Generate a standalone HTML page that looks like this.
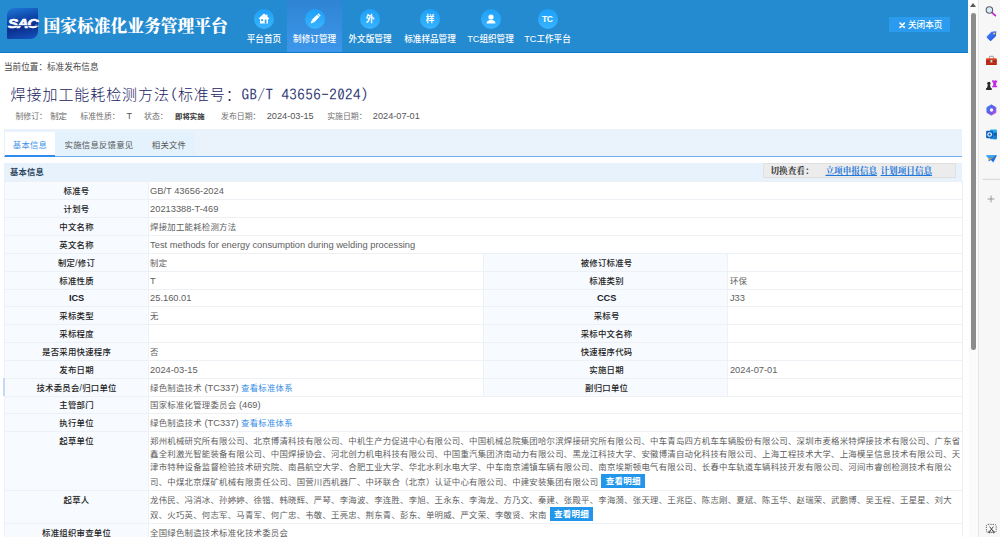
<!DOCTYPE html><html lang="zh-CN"><head><meta charset="utf-8"><title>标准发布信息</title><style>
*{box-sizing:border-box;margin:0;padding:0}
html,body{width:1000px;height:537px;overflow:hidden;background:#fff}
body{position:relative;font-family:"Liberation Sans","Noto Sans CJK SC",sans-serif;font-size:8.6px;color:#333}
a{color:#3a8ee6;text-decoration:none}
.abs{position:absolute;white-space:nowrap}
#hdr{position:absolute;left:0;top:0;width:968px;height:53px;background:#258bd0;border-bottom:1px solid #0c79c9}
#logo{position:absolute;left:7px;top:8.2px;width:31.4px;height:30.8px;border-radius:7.5px 1px 7.5px 1px;background:linear-gradient(168deg,#1f78d8 0%,#0d44a8 38%,#0a2f90 62%,#1655c0 100%)}
#logo span{position:absolute;left:-0.4px;top:8.3px;width:31.4px;text-align:center;font:italic bold 13px/15px "Liberation Sans",sans-serif;color:#fff;letter-spacing:-0.9px;transform:scaleX(1.2);-webkit-text-stroke:0.6px #fff}
#logo i{position:absolute;left:0;top:16.9px;width:31.4px;height:0.7px;background:rgba(12,52,150,0.7)}
#ttl{left:43.6px;top:12.6px;font:900 16.75px/24px "Noto Serif CJK SC","Liberation Serif",serif;color:#fff}
.nv{position:absolute;top:0;height:52px;text-align:center;color:#fff;font-size:8.6px;font-weight:500}
.nv.on{background:linear-gradient(180deg,#2f84d4 0%,#3d97ea 100%)}
.nv .ic{position:absolute;left:50%;top:9px;width:20px;height:20px;margin-left:-10px;border-radius:50%;background:linear-gradient(180deg,#1ea0f8,#38b4ff)}
.nv .ic svg{position:absolute;left:0;top:0;width:20px;height:20px}
.nv .ic b{position:absolute;left:0;top:0;width:20px;line-height:20.4px;font-size:8.7px;color:#fff;text-align:center}
.nv .tc{font-size:9.2px}
.nv .lb{position:absolute;left:-10px;right:-10px;top:33px;line-height:12px;white-space:nowrap}
#cls{position:absolute;left:889px;top:17px;width:61px;height:15.4px;background:#2a9bee;color:#fff;font-size:8.6px;line-height:17px;white-space:nowrap;font-weight:500}
#cls svg{position:absolute;left:9.6px;top:5.2px;width:6.4px;height:6.4px}
#cls .t{position:absolute;left:19px;top:0}
#bc{left:4px;top:61px;line-height:13px;font-size:8.6px;color:#444}
#h1{left:10.6px;top:83.6px;line-height:20px;font-size:15px;letter-spacing:0.93px;color:#1a2360;font-family:"Noto Sans CJK SC",sans-serif;font-weight:300}
#h1 span{font-family:"IPAGothic","Liberation Mono",monospace;letter-spacing:0.46px;color:#323b78}
.inf{top:110px;line-height:13px;font-size:7.9px;color:#707070}
.inf.v{font-size:9.2px;color:#555}
#tabs{position:absolute;left:4px;top:128.6px;width:958px;height:28px;background:#eaf3fc;border-bottom:1px solid #6cadf0}
.tab{position:absolute;top:3px;height:24px;line-height:27.5px;text-align:center;font-size:8.4px;letter-spacing:0.22px;color:#555;background:#e3f2fd}
.tab.on{background:#fff;color:#3f93ea;border-bottom:2px solid #2f8cee;height:25px}
#sec{position:absolute;left:4px;top:163px;width:958px;height:18.4px;background:#e8f2fc}
#sec b{position:absolute;left:6px;top:0;line-height:18.2px;font-size:8.3px;letter-spacing:0.22px;color:#2b4560}
#sw{position:absolute;left:763px;top:163.3px;width:193px;height:14.4px;background:#ececec;border:1px solid #e0e0e0;font:bold 8.6px/12.6px "Noto Serif CJK SC","Liberation Serif",serif;color:#333;white-space:nowrap}
#sw span{position:absolute;top:0}
#sw a{color:#1f78dc;text-decoration:underline}
.row{position:absolute;left:4px;width:958px;border-top:1px solid #edf0f4}
.c{position:absolute;top:0;bottom:0;padding:2.9px 0 0 1.6px;line-height:13.05px;font-size:8.4px;letter-spacing:0.245px;color:#5e5e5e;border-left:1px solid #edf0f4;white-space:nowrap;overflow:hidden}
.c.l{background:#f7fafe;color:#222;font-weight:500;text-align:center;font-size:8.4px;letter-spacing:0.25px;border-left:none}
.c.l2{background:#f7fafe;color:#222;font-weight:500;text-align:center;font-size:8.4px;letter-spacing:0.25px}
i.e{font-style:normal;font-size:9.3px;letter-spacing:0}
.c b{font-size:9.2px;letter-spacing:0;color:#1a1a2a}
.ll{position:relative;top:1.1px}
.btn{display:inline-block;position:relative;top:-1.6px;background:#2196ea;color:#fff;font-weight:bold;font-size:8.5px;line-height:14.3px;height:14.3px;padding:0 4.3px;margin-left:3px;vertical-align:middle}
#sb{position:absolute;left:968px;top:0;width:10px;height:537px;background:linear-gradient(90deg,#fff 0,#fff 1px,#fbfbfb 1px)}
#sb .th{position:absolute;left:2.9px;top:12.5px;width:5px;height:337px;border-radius:2.3px;background:#8c8c8c}
#sb .up{position:absolute;left:2.2px;top:3.2px;width:0;height:0;border-left:3.2px solid transparent;border-right:3.2px solid transparent;border-bottom:4px solid #585858}
#side{position:absolute;left:978px;top:0;width:22px;height:537px;background:#f7f7f7;box-shadow:inset 1px 0 0 #e8e8e8}
#side svg{position:absolute;left:0;top:0}
</style></head><body>
<div id="hdr">
<div id="logo"><span>SAC</span><i></i></div>
<div id="ttl" class="abs">国家标准化业务管理平台</div>
<div class="nv" style="left:240.6px;width:46.6px"><div class="ic"><svg viewBox="0 0 20 20"><path d="M10 4.6 L4.6 9.6 L5.3 10.3 L6 9.7 V14.5 H14 V9.7 L14.7 10.3 L15.4 9.6 L13.4 7.7 V5.6 H12.2 V6.6 Z" fill="#fff"/><rect x="7.2" y="10.2" width="1.9" height="1.9" fill="#2aa5f6"/><rect x="10.7" y="10.6" width="1.8" height="3.9" fill="#2aa5f6"/></svg></div><div class="lb">平台首页</div></div>
<div class="nv on" style="left:287.2px;width:54.8px"><div class="ic"><svg viewBox="0 0 20 20"><g transform="translate(10.1 10) rotate(45)" fill="#fff"><rect x="-1.7" y="-4.4" width="3.4" height="7.2"/><path d="M-1.7 2.8 H1.7 L0 6.4 Z"/><rect x="-1.7" y="-6.4" width="3.4" height="1.5" rx="0.6"/></g></svg></div><div class="lb">制修订管理</div></div>
<div class="nv" style="left:342px;width:56px"><div class="ic"><b>外</b></div><div class="lb">外文版管理</div></div>
<div class="nv" style="left:398px;width:64px"><div class="ic"><b>样</b></div><div class="lb">标准样品管理</div></div>
<div class="nv" style="left:462px;width:57px"><div class="ic"><svg viewBox="0 0 20 20"><circle cx="10" cy="8" r="2.6" fill="#fff"/><path d="M5.6 14.6 Q5.6 11 10 11 Q14.4 11 14.4 14.6 Z" fill="#fff"/></svg></div><div class="lb"><span class="tc">TC</span>组织管理</div></div>
<div class="nv" style="left:519px;width:57px"><div class="ic"><b style="font-size:8.6px;letter-spacing:-0.4px;text-indent:-0.4px">TC</b></div><div class="lb"><span class="tc">TC</span>工作平台</div></div>
<div id="cls"><svg viewBox="0 0 10 10"><path d="M1.6 1.6 L8.4 8.4 M8.4 1.6 L1.6 8.4" stroke="#fff" stroke-width="2.6" stroke-linecap="round"/></svg><span class="t">关闭本页</span></div>
</div>
<div id="bc" class="abs">当前位置：标准发布信息</div>
<div id="h1" class="abs">焊接加工能耗检测方法<span>(</span>标准号：<span>GB/T 43656-2024)</span></div>
<div class="abs inf" style="left:15.4px;">制修订：</div>
<div class="abs inf" style="left:50.2px;font-size:8.4px;color:#666">制定</div>
<div class="abs inf" style="left:80.3px;">标准性质：</div>
<div class="abs inf v" style="left:126.5px;">T</div>
<div class="abs inf" style="left:144px;">状态：</div>
<div class="abs inf" style="left:175px;font-weight:bold;color:#333;font-size:7.4px">即将实施</div>
<div class="abs inf" style="left:221px;">发布日期：</div>
<div class="abs inf v" style="left:266.7px;">2024-03-15</div>
<div class="abs inf" style="left:327.2px;">实施日期：</div>
<div class="abs inf v" style="left:372.8px;">2024-07-01</div>
<div id="tabs">
<div class="tab on" style="left:1px;width:50px">基本信息</div>
<div class="tab" style="left:51px;width:88px">实施信息反馈意见</div>
<div class="tab" style="left:139px;width:52px">相关文件</div>
</div>
<div id="sec"><b>基本信息</b></div>
<div id="sw"><span style="left:6.5px">切换查看：</span><span style="left:61.5px"><a>立项申报信息</a></span><span style="left:116.5px"><a>计划项目信息</a></span></div>
<div class="row" style="top:181.40px;height:18.55px"><div class="c l" style="left:0;width:143.5px">标准号</div><div class="c" style="left:143.5px;width:814.5px"><i class="e">GB/T 43656-2024</i></div></div>
<div class="row" style="top:199.25px;height:18.55px"><div class="c l" style="left:0;width:143.5px">计划号</div><div class="c" style="left:143.5px;width:814.5px"><i class="e">20213388-T-469</i></div></div>
<div class="row" style="top:217.10px;height:18.55px"><div class="c l" style="left:0;width:143.5px">中文名称</div><div class="c" style="left:143.5px;width:814.5px">焊接加工能耗检测方法</div></div>
<div class="row" style="top:234.95px;height:18.55px"><div class="c l" style="left:0;width:143.5px">英文名称</div><div class="c" style="left:143.5px;width:814.5px"><i class="e">Test methods for energy consumption during welding processing</i></div></div>
<div class="row" style="top:252.80px;height:18.55px"><div class="c l" style="left:0;width:143.5px">制定/修订</div><div class="c" style="left:143.5px;width:335.8px">制定</div><div class="c l2" style="left:479.3px;width:244.0px">被修订标准号</div><div class="c" style="left:723.3px;width:234.7px"></div></div>
<div class="row" style="top:270.65px;height:18.55px"><div class="c l" style="left:0;width:143.5px">标准性质</div><div class="c" style="left:143.5px;width:335.8px"><i class="e">T</i></div><div class="c l2" style="left:479.3px;width:244.0px">标准类别</div><div class="c" style="left:723.3px;width:234.7px">环保</div></div>
<div class="row" style="top:288.50px;height:18.55px"><div class="c l" style="left:0;width:143.5px"><b>ICS</b></div><div class="c" style="left:143.5px;width:335.8px"><i class="e">25.160.01</i></div><div class="c l2" style="left:479.3px;width:244.0px"><b>CCS</b></div><div class="c" style="left:723.3px;width:234.7px"><i class="e">J33</i></div></div>
<div class="row" style="top:306.35px;height:18.55px"><div class="c l" style="left:0;width:143.5px">采标类型</div><div class="c" style="left:143.5px;width:335.8px">无</div><div class="c l2" style="left:479.3px;width:244.0px">采标号</div><div class="c" style="left:723.3px;width:234.7px"></div></div>
<div class="row" style="top:324.20px;height:18.55px"><div class="c l" style="left:0;width:143.5px">采标程度</div><div class="c" style="left:143.5px;width:335.8px"></div><div class="c l2" style="left:479.3px;width:244.0px">采标中文名称</div><div class="c" style="left:723.3px;width:234.7px"></div></div>
<div class="row" style="top:342.05px;height:18.55px"><div class="c l" style="left:0;width:143.5px">是否采用快速程序</div><div class="c" style="left:143.5px;width:335.8px">否</div><div class="c l2" style="left:479.3px;width:244.0px">快速程序代码</div><div class="c" style="left:723.3px;width:234.7px"></div></div>
<div class="row" style="top:359.90px;height:18.55px"><div class="c l" style="left:0;width:143.5px">发布日期</div><div class="c" style="left:143.5px;width:335.8px"><i class="e">2024-03-15</i></div><div class="c l2" style="left:479.3px;width:244.0px">实施日期</div><div class="c" style="left:723.3px;width:234.7px"><i class="e">2024-07-01</i></div></div>
<div class="row" style="top:377.75px;height:18.55px"><div class="c l" style="left:0;width:143.5px">技术委员会/归口单位</div><div class="c" style="left:143.5px;width:335.8px">绿色制造技术 <i class="e">(TC337)</i> <a>查看标准体系</a></div><div class="c l2" style="left:479.3px;width:244.0px">副归口单位</div><div class="c" style="left:723.3px;width:234.7px"></div></div>
<div class="row" style="top:395.60px;height:18.55px"><div class="c l" style="left:0;width:143.5px">主管部门</div><div class="c" style="left:143.5px;width:814.5px">国家标准化管理委员会 <i class="e">(469)</i></div></div>
<div class="row" style="top:413.45px;height:18.55px"><div class="c l" style="left:0;width:143.5px">执行单位</div><div class="c" style="left:143.5px;width:814.5px">绿色制造技术 <i class="e">(TC337)</i> <a>查看标准体系</a></div></div>
<div class="row" style="top:431.30px;height:59.70px"><div class="c l" style="left:0;width:143.5px">起草单位</div><div class="c" style="left:143.5px;width:814.5px">郑州机械研究所有限公司、北京博清科技有限公司、中机生产力促进中心有限公司、中国机械总院集团哈尔滨焊接研究所有限公司、中车青岛四方机车车辆股份有限公司、深圳市麦格米特焊接技术有限公司、广东省<br>鑫全利激光智能装备有限公司、中国焊接协会、河北创力机电科技有限公司、中国重汽集团济南动力有限公司、黑龙江科技大学、安徽博清自动化科技有限公司、上海工程技术大学、上海模呈信息技术有限公司、天<br>津市特种设备监督检验技术研究院、南昌航空大学、合肥工业大学、华北水利水电大学、中车南京浦镇车辆有限公司、南京埃斯顿电气有限公司、长春中车轨道车辆科技开发有限公司、河间市睿创检测技术有限公<br><span class="ll">司、中煤北京煤矿机械有限责任公司、国营川西机器厂、中环联合（北京）认证中心有限公司、中建安装集团有限公司<span class="btn">查看明细</span></span></div></div>
<div class="row" style="top:490.30px;height:33.60px"><div class="c l" style="left:0;width:143.5px">起草人</div><div class="c" style="left:143.5px;width:814.5px">龙伟民、冯消冰、孙婷婷、徐锴、韩晓辉、严琴、李海波、李连胜、李旭、王永东、李海龙、方乃文、秦建、张殿平、李海漪、张天理、王兆臣、陈志刚、夏斌、陈玉华、赵瑞荣、武鹏博、吴玉程、王星星、刘大<br><span class="ll">双、火巧英、何志军、马青军、何广忠、韦敬、王亮忠、荆东青、彭东、单明威、严文荣、李敬贤、宋南<span class="btn">查看明细</span></span></div></div>
<div class="row" style="top:523.20px;height:18.55px"><div class="c l" style="left:0;width:143.5px">标准组织审查单位</div><div class="c" style="left:143.5px;width:814.5px">全国绿色制造技术标准化技术委员会</div></div>
<div style="position:absolute;left:961.5px;top:181px;width:1px;height:356px;background:#edf0f4"></div>
<div style="position:absolute;left:4px;top:181px;width:1px;height:356px;background:#edf0f4"></div>
<div style="position:absolute;left:3px;top:378px;width:1.5px;height:17.5px;background:#c5d9f4"></div>
<div id="sb"><div class="up"></div><div class="th"></div></div>
<div id="side"><svg width="22" height="537" viewBox="978 0 22 537"><defs>
<linearGradient id="gTag" x1="0" y1="0" x2="1" y2="1"><stop offset="0" stop-color="#4a86ff"/><stop offset="1" stop-color="#1f4fe0"/></linearGradient>
<linearGradient id="gM" x1="0" y1="0" x2="1" y2="1"><stop offset="0" stop-color="#2f7df5"/><stop offset="0.55" stop-color="#6a5be8"/><stop offset="1" stop-color="#c04fd8"/></linearGradient>
<linearGradient id="gBox" x1="0" y1="0" x2="0" y2="1"><stop offset="0" stop-color="#e0452a"/><stop offset="1" stop-color="#b3200f"/></linearGradient>
</defs>
<!-- search -->
<line x1="991.8" y1="12.4" x2="995.4" y2="15.6" stroke="#c41fd6" stroke-width="1.7" stroke-linecap="round"/>
<circle cx="989.4" cy="10" r="3.2" fill="#d6ecfb" stroke="#5a5f66" stroke-width="1.1"/>
<!-- tag -->
<path d="M996.2 31.3 L991.4 31.7 L986.8 36.6 Q986.4 37.2 986.9 37.8 L990 40.8 Q990.6 41.3 991.2 40.7 L996 35.9 Z" fill="url(#gTag)"/>
<circle cx="994.2" cy="33.5" r="1" fill="#ffd23e"/>
<!-- toolbox -->
<path d="M989.4 58.4 V57 Q989.4 56.3 990.1 56.3 H992.7 Q993.4 56.3 993.4 57 V58.4" fill="none" stroke="#8d8d8d" stroke-width="0.9"/>
<rect x="986" y="58.2" width="10.8" height="6.9" rx="0.9" fill="url(#gBox)"/>
<rect x="986" y="60.6" width="10.8" height="1" fill="#8f1a0c"/>
<rect x="990.4" y="60" width="2" height="2.4" rx="0.4" fill="#e8e8e8" stroke="#777" stroke-width="0.4"/>
<!-- chess -->
<path d="M992.6 80 h1 v1 h1 v-1 h1.1 v1 h1 v-1 h0.4 v2.4 h-0.9 v3.6 h1 v1.3 h-5 v-1.3 h1 v-3.6 h-0.9 v-2.4 z" fill="#c22be2"/>
<circle cx="988.9" cy="83.4" r="1.7" fill="#2b2b2b"/>
<path d="M987.9 84.6 h2 l0.9 3.4 h0.9 v1.9 h-5.6 v-1.9 h0.9 z" fill="#2b2b2b"/>
<!-- m365 -->
<path d="M991.4 104.8 L995.9 107.4 V112.6 L991.4 115.2 L986.9 112.6 V107.4 Z" fill="url(#gM)" stroke="url(#gM)" stroke-width="0.8" stroke-linejoin="round"/>
<circle cx="991.5" cy="110" r="1.7" fill="#f7f7f7"/>
<!-- outlook -->
<rect x="990" y="129.4" width="6.9" height="9.8" rx="0.9" fill="#28a8ea"/>
<rect x="993.4" y="132.6" width="3.5" height="3.3" fill="#0f5fb4"/>
<rect x="993.4" y="135.9" width="3.5" height="3.3" fill="#1a7bd4"/>
<rect x="986.1" y="130.8" width="7" height="7.4" rx="1" fill="#0f63bf"/>
<circle cx="989.6" cy="134.5" r="1.8" fill="none" stroke="#fff" stroke-width="1.1"/>
<!-- plane -->
<path d="M986 155.6 L997 155.2 L993.3 162.6 L991 159.9 L988.6 161.6 L988.8 158.6 Z" fill="#1c6fe6"/>
<path d="M986 155.6 L997 155.2 L988.8 158.6 Z" fill="#37a7f5"/>
<path d="M988.3 158.9 L995.2 156.2 L989 160.2 Z" fill="#f5a623"/>
<!-- separator + plus -->
<rect x="982.7" y="178.8" width="17.3" height="1" fill="#d4d4d4"/>
<path d="M987.6 199 h6.8 M991 195.6 v6.8" stroke="#8f8f8f" stroke-width="0.9" fill="none"/>
<!-- screenshot -->
<rect x="986.4" y="524.4" width="9.8" height="8" rx="1.6" fill="none" stroke="#555" stroke-width="0.9" stroke-dasharray="1.3 1"/>
<path d="M989.6 526.6 L993.4 531.6 M993.4 526.6 L989.6 531.6" stroke="#333" stroke-width="0.9" fill="none"/>
<circle cx="989.4" cy="532" r="0.9" fill="none" stroke="#333" stroke-width="0.6"/>
<circle cx="993.6" cy="532" r="0.9" fill="none" stroke="#333" stroke-width="0.6"/>
</svg></div>
</body></html>
